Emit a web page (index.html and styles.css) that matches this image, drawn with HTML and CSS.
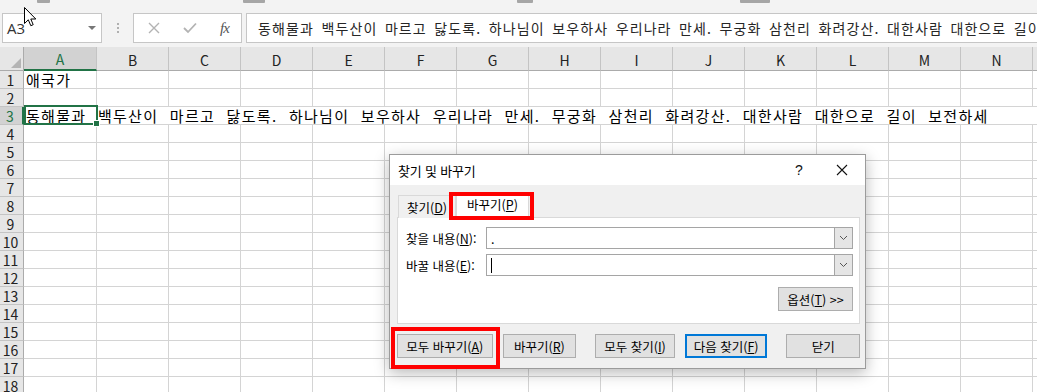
FILE: index.html
```html
<!DOCTYPE html>
<html lang="ko">

<head>
    <meta charset="UTF-8">
    <meta name="viewport" content="width=device-width, initial-scale=1.0">
    <title>찾기 및 바꾸기</title>
    <link rel="stylesheet" href="styles.css">
</head>

<body>
    <!-- Top: ribbon edge + formula bar -->
    <div class="top">
        <div class="ribbon-edge">
            <span class="mark m1"></span>
            <span class="mark m2"></span>
            <span class="mark m3"></span>
            <span class="mark m4"></span>
        </div>
        <div class="formula-bar">
            <div class="name-box">
                <span>A3</span>
                <span class="drop"></span>
            </div>
            <div class="grip"><i></i><i></i><i></i></div>
            <div class="fx-box">
                <svg width="12" height="12" viewBox="0 0 12 12">
                    <path d="M1 1 L11 11 M11 1 L1 11" stroke="#b3b3b3" stroke-width="1.4" fill="none" />
                </svg>
                <svg width="14" height="12" viewBox="0 0 14 12">
                    <path d="M1 6 L5 10 L13 1.5" stroke="#b3b3b3" stroke-width="1.8" fill="none" />
                </svg>
                <span class="fx">fx</span>
            </div>
            <div class="formula-input"><span class="formula-text">동해물과 백두산이 마르고 닳도록. 하나님이 보우하사 우리나라 만세. 무궁화 삼천리 화려강산. 대한사람 대한으로 길이 보전하세</span></div>
        </div>
    </div>

    <!-- Worksheet grid (built below) -->
    <div class="sheet" id="sheet"></div>

    <!-- Find & Replace dialog -->
    <div class="dialog">
        <div class="title-bar">
            <span class="title">찾기 및 바꾸기</span>
            <span class="help">?</span>
            <span class="close">
                <svg width="12" height="12" viewBox="0 0 12 12">
                    <path d="M1 1 L11 11 M11 1 L1 11" stroke="#111" stroke-width="1.1" fill="none" />
                </svg>
            </span>
        </div>
        <div class="dialog-body">
            <div class="tabs">
                <div class="tab">찾기(<u>D</u>)</div>
                <div class="tab selected">바꾸기(<u>P</u>)</div>
            </div>
            <div class="panel">
                <div class="field">
                    <label>찾을 내용(<u>N</u>):</label>
                    <div class="combo">
                        <span class="value">.</span>
                        <span class="combo-btn">
                            <svg width="9" height="6" viewBox="0 0 9 6">
                                <path d="M1 1 L4.5 4.5 L8 1" stroke="#555" stroke-width="1" fill="none" />
                            </svg>
                        </span>
                    </div>
                </div>
                <div class="field">
                    <label>바꿀 내용(<u>E</u>):</label>
                    <div class="combo">
                        <span class="value"><span class="text-caret"></span></span>
                        <span class="combo-btn">
                            <svg width="9" height="6" viewBox="0 0 9 6">
                                <path d="M1 1 L4.5 4.5 L8 1" stroke="#555" stroke-width="1" fill="none" />
                            </svg>
                        </span>
                    </div>
                </div>
                <div class="options-row">
                    <button class="btn options">옵션(<u>T</u>) &gt;&gt;</button>
                </div>
            </div>
            <div class="buttons">
                <button class="btn b-all">모두 바꾸기(<u>A</u>)</button>
                <button class="btn b-one">바꾸기(<u>R</u>)</button>
                <button class="btn b-findall">모두 찾기(<u>I</u>)</button>
                <button class="btn b-next default">다음 찾기(<u>F</u>)</button>
                <button class="btn b-close">닫기</button>
            </div>
        </div>
        <!-- red annotation boxes -->
        <div class="mark-box tab-mark"></div>
        <div class="mark-box btn-mark"></div>
    </div>

    <!-- mouse pointer -->
    <svg class="pointer" width="13" height="21" viewBox="0 0 13 21">
        <path d="M0.5 0.5 L0.5 16.5 L4.3 12.8 L6.8 18.7 L9.2 17.7 L6.8 12 L11.8 12 Z" fill="#fff" stroke="#000" stroke-width="1" />
    </svg>

    <script>
        const cols = "ABCDEFGHIJKLMN".split("");
        const sheet = document.getElementById("sheet");
        const anthem = "동해물과 백두산이 마르고 닳도록. 하나님이 보우하사 우리나라 만세. 무궁화 삼천리 화려강산. 대한사람 대한으로 길이 보전하세";

        let html = '<div class="row head-row"><div class="corner"><span class="tri"></span></div>';
        cols.forEach(c => {
            html += `<div class="col-head${c === 'A' ? ' a active' : ''}">${c}</div>`;
        });
        html += '<div class="col-head rest"></div></div>';

        for (let r = 1; r <= 18; r++) {
            html += `<div class="row${r === 3 ? ' spill' : ''}">`;
            html += `<div class="row-head${r === 3 ? ' active' : ''}">${r}</div>`;
            cols.forEach(c => {
                let inner = "";
                let cls = "cell";
                if (c === 'A') cls += " a";
                if (c === 'A' && r === 1) inner = '<span class="val">애국가</span>';
                if (c === 'A' && r === 3) {
                    cls += " selected";
                    inner = `<span class="val">${anthem}</span><span class="handle"></span>`;
                }
                html += `<div class="${cls}">${inner}</div>`;
            });
            html += '<div class="cell rest"></div></div>';
        }
        sheet.innerHTML = html;
    </script>
</body>

</html>
```

FILE: styles.css
```css
body {
    margin: 0;
    padding: 0;
    position: relative;
    width: 1037px;
    height: 392px;
    overflow: hidden;
    background-color: #fff;
    font-family: "Noto Sans CJK KR", "Noto Sans", sans-serif;
    color: #000;
}

/* Top strip + formula bar */
.top {
    height: 47px;
    background-color: #f3f3f3;
}

.ribbon-edge {
    display: flex;
    height: 4px;
}

.mark {
    height: 3px;
    background-color: #a6a6a6;
    border-radius: 0 0 1px 1px;
}

.m1 { margin-left: 37px; width: 13px; }
.m2 { margin-left: 193px; width: 22px; }
.m3 { margin-left: 252px; width: 16px; }
.m4 { margin-left: 207px; width: 30px; }

.formula-bar {
    display: flex;
    margin-top: 9px;
    height: 30px;
}

.name-box {
    box-sizing: border-box;
    margin-left: 2px;
    width: 100px;
    height: 30px;
    background-color: #fff;
    border: 1px solid #c6c6c6;
    display: flex;
    align-items: center;
    justify-content: space-between;
    padding: 0 5px 0 4px;
    font-family: "Open Sans", "Noto Sans", sans-serif;
    font-size: 15px;
    color: #333;
}

.drop {
    width: 0;
    height: 0;
    border-left: 4px solid transparent;
    border-right: 4px solid transparent;
    border-top: 4px solid #777;
}

.grip {
    width: 31px;
    display: flex;
    flex-direction: column;
    align-items: center;
    justify-content: center;
    gap: 2px;
}

.grip i {
    width: 2px;
    height: 2px;
    background-color: #b0b0b0;
}

.fx-box {
    box-sizing: border-box;
    width: 109px;
    height: 30px;
    background-color: #fff;
    border: 1px solid #c6c6c6;
    display: flex;
    align-items: center;
    padding-left: 14px;
    gap: 23px;
}

.fx {
    font-family: "Liberation Serif", serif;
    font-style: italic;
    font-size: 15px;
    color: #555;
    letter-spacing: -1px;
}

.formula-input {
    box-sizing: border-box;
    flex: 1;
    min-width: 0;
    margin-left: 4px;
    height: 30px;
    background-color: #fff;
    border: 1px solid #c6c6c6;
    border-right: none;
    padding-left: 11px;
    display: flex;
    align-items: center;
    overflow: hidden;
}

.formula-text {
    white-space: pre;
    font-size: 14px;
    letter-spacing: 1.1px;
    word-spacing: 2.5px;
    color: #262626;
}

/* Sheet */
.sheet {
    background-color: #fff;
}

.row {
    display: flex;
    height: 18px;
}

.head-row {
    height: 24px;
}

.corner {
    box-sizing: border-box;
    width: 24px;
    background-color: #e6e6e6;
    border-right: 1px solid #ababab;
    border-bottom: 1px solid #ababab;
    display: flex;
    align-items: flex-end;
    justify-content: flex-end;
    padding: 0 2px 2px 0;
}

.tri {
    width: 10px;
    height: 10px;
    background-color: #b4b4b4;
    clip-path: polygon(100% 0, 100% 100%, 0 100%);
}

.col-head {
    box-sizing: border-box;
    width: 72px;
    background-color: #e6e6e6;
    border-right: 1px solid #c4c4c4;
    border-bottom: 1px solid #ababab;
    display: flex;
    align-items: center;
    justify-content: center;
    font-size: 14px;
    color: #222;
    padding-top: 2px;
}

.col-head.a {
    width: 73px;
}

.col-head.active {
    background-color: #d2d2d2;
    color: #217346;
    border-bottom: 2px solid #217346;
}

.col-head.rest,
.cell.rest {
    flex: 1;
    border-right: none;
}

.row-head {
    box-sizing: border-box;
    width: 24px;
    background-color: #e6e6e6;
    border-right: 1px solid #ababab;
    border-bottom: 1px solid #c4c4c4;
    display: flex;
    align-items: center;
    justify-content: center;
    font-size: 14px;
    color: #222;
    padding-right: 2px;
}

.row-head.active {
    background-color: #d2d2d2;
    color: #217346;
    border-right: 2px solid #217346;
}

.cell {
    box-sizing: border-box;
    width: 72px;
    border-right: 1px solid #d4d4d4;
    border-bottom: 1px solid #d4d4d4;
    display: flex;
    align-items: center;
    font-size: 15px;
    color: #000;
}

.cell.a {
    width: 73px;
}

.spill .cell {
    border-right: none;
}

.val {
    white-space: pre;
    letter-spacing: 1.3px;
    word-spacing: 6px;
    padding-left: 2px;
    position: relative;
    z-index: 1;
}

.cell.selected {
    position: relative;
    overflow: visible;
}

.cell.selected::after {
    content: "";
    position: absolute;
    top: -2px;
    left: 0;
    right: -1px;
    bottom: -1px;
    border: 2px solid #217346;
    z-index: 2;
}

.handle {
    position: absolute;
    right: -3px;
    bottom: -3px;
    width: 5px;
    height: 5px;
    background-color: #217346;
    border: 1px solid #fff;
    z-index: 3;
}

/* Dialog */
.dialog {
    position: absolute;
    left: 389px;
    top: 154px;
    width: 477px;
    height: 215px;
    box-sizing: border-box;
    background-color: #f0f0f0;
    border: 1px solid #9b9b9b;
    box-shadow: 0 4px 14px rgba(0, 0, 0, 0.28);
    z-index: 10;
    font-size: 12.5px;
}

.title-bar {
    height: 30px;
    background-color: #fff;
    display: flex;
    align-items: center;
}

.title {
    flex: 1;
    padding-left: 8px;
    font-size: 13px;
    letter-spacing: -0.2px;
}

.help {
    width: 44px;
    text-align: center;
    font-family: "Liberation Sans", sans-serif;
    font-size: 14px;
    color: #111;
}

.close {
    width: 42px;
    display: flex;
    justify-content: center;
    padding-right: 2px;
}

.dialog-body {
    padding: 7px 5px 0 7px;
}

.tabs {
    display: flex;
    align-items: flex-end;
    height: 26px;
    margin-bottom: -1px;
    position: relative;
    z-index: 1;
}

.tab {
    box-sizing: border-box;
    height: 23px;
    padding: 0 8px;
    margin-left: 1px;
    border: 1px solid #d9d9d9;
    border-bottom: none;
    background-color: #f0f0f0;
    display: flex;
    align-items: center;
}

.tab.selected {
    height: 26px;
    margin-left: 0;
    padding: 0 10px 3px;
    background-color: #fff;
}

.panel {
    box-sizing: border-box;
    height: 107px;
    background-color: #fff;
    border: 1px solid #d9d9d9;
    padding: 9px 6px 0 8px;
}

.field {
    display: flex;
    align-items: center;
    height: 22px;
    margin-bottom: 5px;
}

.field label {
    width: 80px;
}

.combo {
    box-sizing: border-box;
    flex: 1;
    height: 22px;
    border: 1px solid #a5a5a5;
    background-color: #fff;
    display: flex;
}

.combo .value {
    flex: 1;
    padding-left: 4px;
    display: flex;
    align-items: center;
}

.text-caret {
    width: 1px;
    height: 15px;
    background-color: #000;
}

.combo-btn {
    width: 17px;
    background-color: #e5e5e5;
    border-left: 1px solid #a5a5a5;
    display: flex;
    align-items: center;
    justify-content: center;
}

.options-row {
    display: flex;
    justify-content: flex-end;
    margin-top: 11px;
}

.btn {
    box-sizing: border-box;
    height: 24px;
    background-color: #e1e1e1;
    border: 1px solid #adadad;
    font-family: "Noto Sans CJK KR", "Noto Sans", sans-serif;
    font-size: 12.5px;
    color: #000;
    padding: 0;
    margin: 0;
}

.options {
    width: 75px;
}

.buttons {
    display: flex;
    margin-top: 10px;
}

.b-all { width: 96px; }
.b-one { width: 74px; margin-left: 10px; }
.b-findall { width: 80px; margin-left: 19px; }
.b-next { width: 83px; margin-left: 10px; }
.b-close { width: 74px; margin-left: 19px; }

.btn.default {
    border: 2px solid #0078d7;
}

.mark-box {
    position: absolute;
    box-sizing: border-box;
    border: 4px solid #ff0000;
    z-index: 5;
}

.tab-mark {
    left: 59px;
    top: 37px;
    width: 85px;
    height: 28px;
}

.btn-mark {
    left: 1px;
    top: 172px;
    width: 109px;
    height: 42px;
}

.pointer {
    position: absolute;
    left: 24px;
    top: 7px;
    z-index: 20;
}
```
